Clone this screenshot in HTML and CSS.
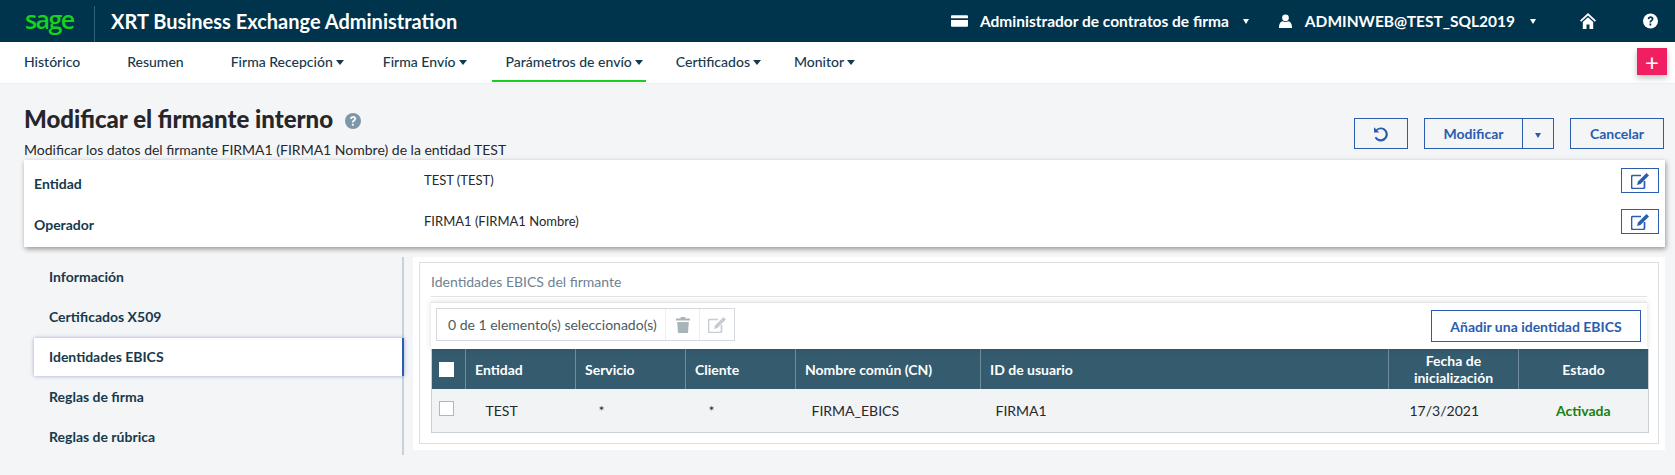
FILE: index.html
```html
<!DOCTYPE html>
<html lang="es">
<head>
<meta charset="utf-8">
<title>XRT Business Exchange Administration</title>
<link rel="stylesheet" href="styles.css">
</head>
<body>
<header class="topbar">
  <span class="logo">sage</span>
  <span class="brand-sep"></span>
  <span class="app-title">XRT Business Exchange Administration</span>
  <div class="top-right">
    <svg class="ic-card" viewBox="0 0 18 12"><path d="M1 0h16a1 1 0 0 1 1 1v2H0V1a1 1 0 0 1 1-1zM0 5h18v6a1 1 0 0 1-1 1H1a1 1 0 0 1-1-1z" fill="#fff"/></svg>
    <span class="top-label contract">Administrador de contratos de firma</span>
    <span class="top-caret caret-a"></span>
    <svg class="ic-user" viewBox="0 0 16 16"><circle cx="8" cy="4" r="3.6" fill="#fff"/><path d="M1 15c0-5 2-7 4-7.3 1.800 1 4.200 1 6 0 2 .3 4 2.300 4 7.300z" fill="#fff"/></svg>
    <span class="top-label user">ADMINWEB@TEST_SQL2019</span>
    <span class="top-caret caret-b"></span>
    <svg class="ic-home" viewBox="0 0 16 16"><path d="M8 0 0 7.500l1.200 1.300L8 2.600l6.800 6.200L16 7.500zM8 4.200 2.800 9v7h3.700v-4.500h3V16h3.700V9z" fill="#fff"/></svg>
    <svg class="ic-help" viewBox="0 0 16 16"><circle cx="8" cy="8" r="8" fill="#fff"/><path d="M5 6c0-4 6.200-4 6.200-.3 0 2.300-2.400 2.300-2.400 3.900H6.900c0-2.600 2.300-2.600 2.300-3.800 0-1.300-2.200-1.200-2.300.3zM6.900 10.700h1.900v2H6.900z" fill="#00344c"/></svg>
  </div>
</header>
<nav class="mainnav">
  <a class="nav-item i1">Histórico</a>
  <a class="nav-item i2">Resumen</a>
  <a class="nav-item i3">Firma Recepción<i class="dn"></i></a>
  <a class="nav-item i4">Firma Envío<i class="dn"></i></a>
  <a class="nav-item i5 active">Parámetros de envío<i class="dn"></i></a>
  <a class="nav-item i6">Certificados<i class="dn"></i></a>
  <a class="nav-item i7">Monitor<i class="dn"></i></a>
  <button class="fab">+</button>
</nav>
<main class="page">
  <section class="page-head">
    <div>
      <h1>Modificar el firmante interno <svg class="ic-q" viewBox="0 0 16 16"><circle cx="8" cy="8" r="8" fill="#7d97a8"/><path d="M5 6c0-4 6.200-4 6.200-.3 0 2.300-2.400 2.300-2.400 3.900H6.900c0-2.600 2.300-2.600 2.300-3.800 0-1.300-2.200-1.200-2.300.3zM6.900 10.700h1.900v2H6.900z" fill="#f4f5f7"/></svg></h1>
      <p class="sub">Modificar los datos del firmante FIRMA1 (FIRMA1 Nombre) de la entidad TEST</p>
    </div>
    <div class="actions">
      <button class="btn btn-undo"><svg viewBox="0 0 16 16"><path d="M3.200 3.300 1 1.200v5.300h5.300L4.300 4.500a5 5 0 1 1-1 6.200l-1.700 1a7 7 0 1 0 1.600-8.400z" fill="#2a5db0"/></svg></button>
      <div class="split">
        <button class="btn btn-main">Modificar</button>
        <button class="btn btn-drop"><i class="dn blue"></i></button>
      </div>
      <button class="btn btn-cancel">Cancelar</button>
    </div>
  </section>

  <section class="summary">
    <div class="sum-row">
      <span class="sum-label">Entidad</span>
      <span class="sum-value">TEST (TEST)</span>
      <button class="btn btn-edit"><svg viewBox="0 0 18 16"><path d="M15.500 0 7 8.500 6 12l3.500-1L18 2.500z" fill="#2a5db0"/><path d="M10 2.500H2a1.500 1.500 0 0 0-1.500 1.500v10A1.500 1.500 0 0 0 2 15.500h10a1.500 1.500 0 0 0 1.500-1.500V8" fill="none" stroke="#2a5db0" stroke-width="1.700"/></svg></button>
    </div>
    <div class="sum-row">
      <span class="sum-label">Operador</span>
      <span class="sum-value">FIRMA1 (FIRMA1 Nombre)</span>
      <button class="btn btn-edit"><svg viewBox="0 0 18 16"><path d="M15.500 0 7 8.500 6 12l3.500-1L18 2.500z" fill="#2a5db0"/><path d="M10 2.500H2a1.500 1.500 0 0 0-1.500 1.500v10A1.500 1.500 0 0 0 2 15.500h10a1.500 1.500 0 0 0 1.500-1.500V8" fill="none" stroke="#2a5db0" stroke-width="1.700"/></svg></button>
    </div>
  </section>

  <section class="content">
    <aside class="side">
      <a class="side-item">Información</a>
      <a class="side-item">Certificados X509</a>
      <a class="side-item current">Identidades EBICS</a>
      <a class="side-item">Reglas de firma</a>
      <a class="side-item">Reglas de rúbrica</a>
    </aside>
    <div class="panel">
      <div class="panel-inner">
        <h2 class="panel-title">Identidades EBICS del firmante</h2>
        <div class="toolbar">
          <div class="selbox">
            <span class="sel-text">0 de 1 elemento(s) seleccionado(s)</span>
            <span class="sel-ic"><svg class="ic-trash" viewBox="0 0 14 16"><path d="M5 0h4l.6 1.500H14v2H0v-2h4.400zM1.200 5h11.600l-.8 11H2z" fill="#a9b3ba"/></svg></span>
            <span class="sel-ic"><svg class="ic-edit-off" viewBox="0 0 18 16"><path d="M15.500 0 7 8.500 6 12l3.500-1L18 2.500z" fill="#c6ccd1"/><path d="M10 2.500H2a1.500 1.500 0 0 0-1.500 1.500v10A1.500 1.500 0 0 0 2 15.500h10a1.500 1.500 0 0 0 1.500-1.500V8" fill="none" stroke="#c6ccd1" stroke-width="1.700"/></svg></span>
          </div>
          <button class="btn btn-add">Añadir una identidad EBICS</button>
        </div>
        <table class="grid">
          <colgroup>
            <col class="c0"><col class="c1"><col class="c2"><col class="c3"><col class="c4"><col class="c5"><col class="c6"><col class="c7">
          </colgroup>
          <thead>
            <tr>
              <th class="chk"><span class="box head"></span></th>
              <th>Entidad</th>
              <th>Servicio</th>
              <th>Cliente</th>
              <th>Nombre común (CN)</th>
              <th>ID de usuario</th>
              <th class="ctr">Fecha de<br>inicialización</th>
              <th class="ctr">Estado</th>
            </tr>
          </thead>
          <tbody>
            <tr>
              <td class="chk"><span class="box"></span></td>
              <td class="p21">TEST</td>
              <td class="p23">*</td>
              <td class="p23">*</td>
              <td class="p16">FIRMA_EBICS</td>
              <td class="p15">FIRMA1</td>
              <td class="date">17/3/2021</td>
              <td class="ctr state">Activada</td>
            </tr>
          </tbody>
        </table>
      </div>
    </div>
  </section>
</main>
</body>
</html>
```
FILE: styles.css
```css
* { box-sizing: border-box; }
html, body { margin: 0; padding: 0; }
body {
  width: 1675px;
  height: 475px;
  overflow: hidden;
  background: #f4f5f7;
  font-family: Lato, "Liberation Sans", sans-serif;
  font-size: 14px;
  color: #1c2b33;
}
button { font-family: inherit; cursor: pointer; }

.topbar {
  height: 42px;
  background: #00344c;
  display: flex;
  align-items: center;
  color: #fff;
}
.logo {
  margin-left: 25px;
  width: 53px;
  font-family: "Open Sans", sans-serif;
  font-size: 25px;
  font-weight: 600;
  letter-spacing: -1.6px;
  line-height: 36px;
  color: #15d31d;
  position: relative;
  top: -2px;
}
.brand-sep {
  width: 1px;
  height: 36px;
  margin: 6px 16px 0 16px;
  background: #33607a;
}
.app-title { font-size: 20px; font-weight: 700; white-space: nowrap; }
.top-right {
  margin-left: auto;
  display: flex;
  align-items: center;
  height: 100%;
  padding-right: 17px;
}
.top-label { font-size: 15.500px; font-weight: 700; white-space: nowrap; }
.ic-card { width: 17px; height: 12px; margin-right: 12px; }
.ic-user { width: 15px; height: 15px; margin-right: 12px; }
.ic-home { width: 16px; height: 16px; margin-right: 47px; }
.ic-help { width: 15px; height: 16px; }
.top-caret {
  width: 0; height: 0;
  border-left: 3.500px solid transparent;
  border-right: 3.500px solid transparent;
  border-top: 5px solid #fff;
}
.caret-a { margin: 0 29px 0 14px; }
.caret-b { margin: 0 44px 0 15px; }

.mainnav {
  height: 42px;
  background: #fff;
  border-bottom: 1px solid #eceef1;
  display: flex;
  position: relative;
  padding-left: 24px;
}
.nav-item {
  font-size: 14px;
  font-weight: 500;
  color: #17394c;
  line-height: 40px;
  white-space: nowrap;
  display: block;
}
.i1 { margin-right: 47px; }
.i2 { margin-right: 47px; }
.i3 { margin-right: 39px; }
.i4 { margin-right: 39px; }
.i5 { margin-right: 33px; }
.i6 { margin-right: 33px; }
.active {
  position: relative;
}
.active::after {
  content: "";
  position: absolute;
  left: -14px;
  right: -3px;
  bottom: 0;
  top: 38px;
  height: 2px;
  background: #16cf1e;
}
.dn {
  display: inline-block;
  width: 0; height: 0;
  margin-left: 3px;
  vertical-align: 2px;
  border-left: 4px solid transparent;
  border-right: 4px solid transparent;
  border-top: 5px solid #17394c;
}
.dn.blue { border-top-color: #2a5db0; margin: 0; border-left-width: 3.500px; border-right-width: 3.500px; vertical-align: 1px; }
.fab {
  position: absolute;
  left: 1637px;
  top: 6px;
  width: 30px;
  height: 27px;
  border: 0;
  padding: 0;
  background: #ef1f62;
  color: #fff;
  font-size: 24px;
  line-height: 24px;
  box-shadow: 0 3px 6px rgba(0, 0, 0, .25);
}

.page-head {
  height: 78px;
  padding: 19px 11px 0 24px;
  display: flex;
  justify-content: space-between;
}
h1 {
  margin: 0;
  font-size: 24px;
  font-weight: 900;
  line-height: 32px;
  color: #26262a;
}
.ic-q { width: 16px; height: 16px; margin-left: 6px; vertical-align: -1px; }
.sub { margin: 4px 0 0; font-size: 14px; line-height: 22px; color: #26282c; }
.actions { display: flex; gap: 16px; padding-top: 15px; }
.btn {
  background: transparent;
  border: 1px solid #2a5db0;
  color: #2a5db0;
  font-size: 14px;
  font-weight: 700;
  padding: 0;
  border-radius: 0;
}
.actions .btn { height: 31px; }
.btn-undo { width: 54px; display: flex; align-items: center; justify-content: center; }
.btn-undo svg { width: 16px; height: 16px; }
.split { display: flex; }
.btn-main { width: 99px; }
.btn-drop { width: 32px; margin-left: -1px; }
.btn-cancel { width: 94px; }

.summary {
  margin: -2px 10px 0 24px;
  height: 87px;
  background: #fff;
  padding: 8px 6px 0 10px;
  box-shadow: 1px 2px 5px rgba(0, 0, 0, .4);
  position: relative;
}
.sum-row { height: 41px; display: flex; align-items: flex-start; }
.sum-label { width: 390px; font-weight: 700; color: #17394c; padding-top: 6px; line-height: 20px; }
.sum-value { flex: 1; font-size: 13px; line-height: 20px; padding-top: 2px; color: #26282c; }
.btn-edit { width: 38px; height: 25px; display: flex; align-items: center; justify-content: center; }
.btn-edit svg { width: 18px; height: 16px; }

.content {
  display: flex;
  margin-top: 10px;
  padding-left: 34px;
  align-items: flex-start;
}
.side {
  width: 370px;
  height: 198px;
  border-right: 2px solid #c8d0d8;
  padding-top: 0;
}
.side-item {
  display: block;
  height: 40px;
  line-height: 40px;
  padding-left: 15px;
  font-weight: 700;
  color: #17394c;
  font-size: 14px;
}
.side-item.current {
  height: 38px;
  margin: 1px -2px 1px 0;
  line-height: 38px;
  background: #fff;
  border-right: 2px solid #2a5db0;
  box-shadow: 0 0 4px rgba(50, 80, 150, .45);
}
.panel {
  margin-left: 9px;
  width: 1252px;
  height: 193px;
  background: #fff;
  padding: 5px 6px 6px 6px;
}
.panel-inner {
  height: 100%;
  border: 1px solid #dcdfe2;
  padding: 0 11px;
}
.panel-title {
  margin: 0;
  height: 34px;
  border-bottom: 1px solid #e2e5e8;
  font-size: 14px;
  font-weight: 400;
  line-height: 38px;
  color: #6d8392;
}
.toolbar {
  margin-top: 5px;
  height: 47px;
  border-top: 1px solid #e2e5e8;
  padding: 5px 6px 0 5px;
  display: flex;
  justify-content: space-between;
  align-items: flex-start;
  box-shadow: 0 0 6px rgba(0, 0, 0, .14);
  position: relative;
}
.selbox {
  width: 299px;
  height: 33px;
  border: 1px solid #d5d9dd;
  display: flex;
  align-items: center;
}
.sel-text { width: 228px; padding-left: 11px; color: #4b5a63; font-size: 14px; white-space: nowrap; }
.sel-ic {
  width: 34px;
  height: 100%;
  border-left: 1px solid #eceef0;
  display: flex;
  align-items: center;
  justify-content: center;
}
.ic-trash { width: 14px; height: 16px; }
.ic-edit-off { width: 18px; height: 16px; }
.btn-add { width: 210px; height: 32px; margin-top: 2px; }

.grid {
  width: 1217px;
  border-collapse: collapse;
  table-layout: fixed;
  border-left: 1px solid #c9d0d6;
  border-right: 1px solid #c9d0d6;
  border-bottom: 1px solid #c9d0d6;
}
.c0 { width: 34px; }
.c1 { width: 110px; }
.c2 { width: 110px; }
.c3 { width: 110px; }
.c4 { width: 185px; }
.c5 { width: 408px; }
.c6 { width: 130px; }
.c7 { width: 130px; }
thead th {
  height: 40px;
  background: #345b6e;
  color: #fff;
  font-size: 14px;
  font-weight: 700;
  text-align: left;
  padding: 0 9px;
  line-height: 17px;
  border-left: 1px solid #6f8d9c;
}
thead th:first-child { border-left: 0; }
th.ctr { text-align: center; padding: 0; }
tbody td {
  height: 43px;
  background: #f1f3f5;
  color: #26282c;
  font-size: 14px;
  padding: 0;
}
td.p21 { padding-left: 20px; }
td.p23 { padding-left: 23px; vertical-align: middle; }
td.p16 { padding-left: 16px; }
td.p15 { padding-left: 15px; }
td.date { padding-left: 21px; }
td.ctr { text-align: center; }
.state { color: #18820f; font-weight: 700; }
.chk { padding: 0 0 0 7px !important; }
.box {
  display: block;
  width: 15px;
  height: 15px;
  background: #fff;
  border: 1px solid #b0b7bd;
}
td.chk .box { margin-top: -4px; }
.box.head { border-color: #fff; }
```
